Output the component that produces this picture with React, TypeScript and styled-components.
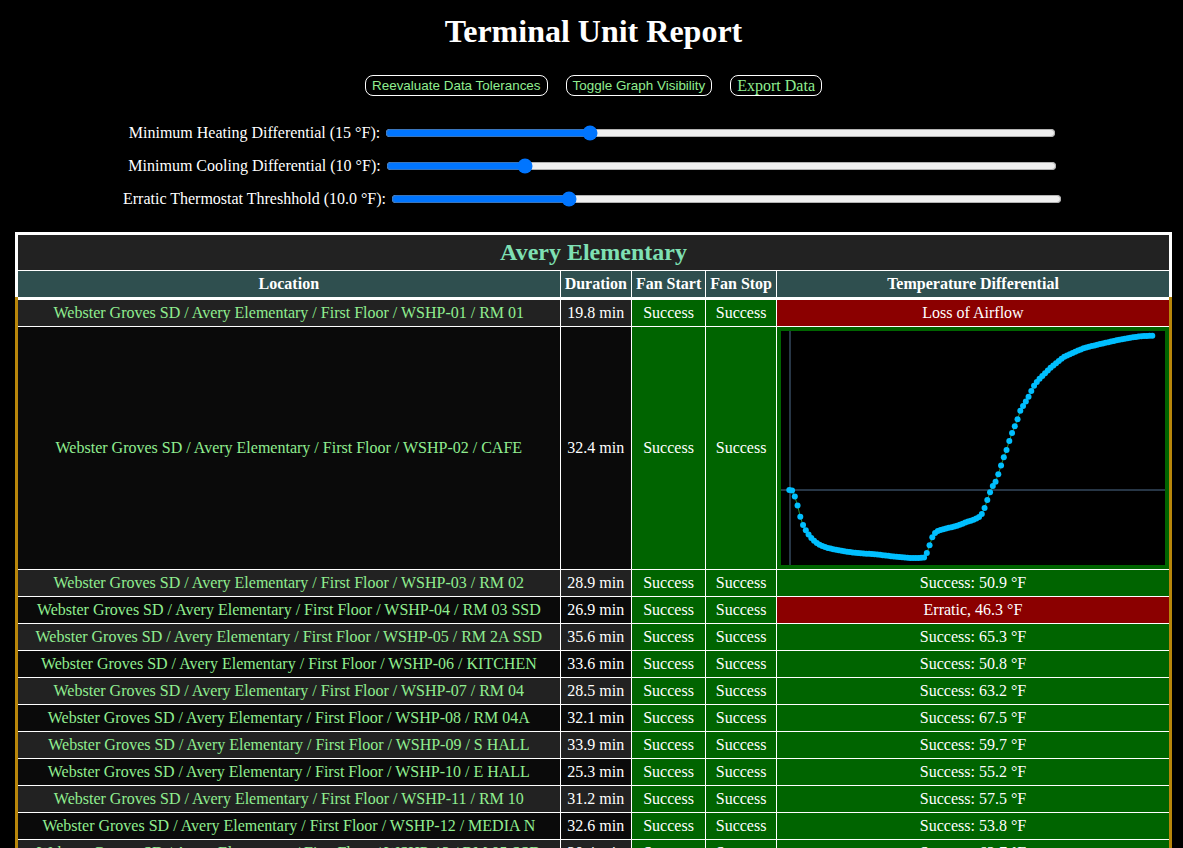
import React from "react";
import styled, { createGlobalStyle } from "styled-components";

const GlobalStyle = createGlobalStyle`
  html, body {
    background: #000;
  }
  body {
    margin: 0;
    color: #fff;
    font-family: "Liberation Serif", "Times New Roman", serif;
    font-size: 16px;
  }
`;

const Page = styled.div`
  box-sizing: border-box;
  width: 100%;
  padding: 13px 4px 8px 8px;
`;

const Title = styled.h1`
  margin: 0;
  text-align: center;
  font-size: 32px;
  font-weight: bold;
  line-height: 37px;
  color: #fff;
`;

const Toolbar = styled.div`
  display: flex;
  justify-content: center;
  gap: 18px;
  margin-top: 25px;
`;

const ActionButton = styled.button<{ $serif?: boolean }>`
  box-sizing: border-box;
  height: 21px;
  padding: 0 6px;
  background: #000;
  color: #90ee90;
  border: 1px solid #fff;
  border-radius: 8px;
  font-family: ${(p) =>
    p.$serif ? '"Liberation Serif", "Times New Roman", serif' : '"Liberation Sans", Arial, sans-serif'};
  font-size: ${(p) => (p.$serif ? "16px" : "13.45px")};
  line-height: 1;
  cursor: pointer;
`;

const Sliders = styled.div`
  display: flex;
  flex-direction: column;
  margin-top: 20px;
`;

const SliderRow = styled.label`
  display: flex;
  justify-content: center;
  align-items: center;
  height: 33px;
  gap: 3px;
  font-size: 16px;
  color: #fff;
`;

const Range = styled.input`
  width: 671px;
  margin: 2px;
  accent-color: #0075ff;
`;

const Table = styled.table`
  border-collapse: collapse;
  width: calc(100% - 14px);
  margin: 17px auto 0;
  border: 3px solid #fff;
  font-size: 16px;
`;

const Head = styled.thead`
  border-bottom: 3px solid #fff;
`;

const Caption = styled.th`
  background: #222;
  color: #7fe0b4;
  font-size: 24px;
  font-weight: bold;
  padding: 4px;
  border: 1px solid #fff;
`;

const HeadCell = styled.th<{ $shrink?: boolean }>`
  background: #2f4f4f;
  color: #fff;
  font-weight: bold;
  padding: 4px;
  border: 1px solid #fff;
  white-space: nowrap;
  width: ${(p) => (p.$shrink ? "1%" : "auto")};
`;

const BodyRow = styled.tr<{ $alt: boolean }>`
  border-left: 3px solid #b8860b;
  border-right: 3px solid #b8860b;
  background: ${(p) => (p.$alt ? "#0a0a0a" : "#222")};
`;

const Cell = styled.td`
  padding: 4px;
  border: 1px solid #fff;
  text-align: center;
  white-space: nowrap;
`;

const LocationCell = styled(Cell)`
  color: #90ee90;
`;

const StatusCell = styled(Cell)<{ $ok: boolean }>`
  background: ${(p) => (p.$ok ? "#006400" : "#8b0000")};
  color: #fff;
`;

const ChartBox = styled.svg`
  display: block;
  background: #000;
`;

type Temp = { kind: "ok" | "fail"; text: string } | { kind: "chart" };

type Row = { room: string; duration: string; temp: Temp };

const prefix = "Webster Groves SD / Avery Elementary / First Floor / ";

const rows: Row[] = [
  { room: "WSHP-01 / RM 01", duration: "19.8 min", temp: { kind: "fail", text: "Loss of Airflow" } },
  { room: "WSHP-02 / CAFE", duration: "32.4 min", temp: { kind: "chart" } },
  { room: "WSHP-03 / RM 02", duration: "28.9 min", temp: { kind: "ok", text: "Success: 50.9 °F" } },
  { room: "WSHP-04 / RM 03 SSD", duration: "26.9 min", temp: { kind: "fail", text: "Erratic, 46.3 °F" } },
  { room: "WSHP-05 / RM 2A SSD", duration: "35.6 min", temp: { kind: "ok", text: "Success: 65.3 °F" } },
  { room: "WSHP-06 / KITCHEN", duration: "33.6 min", temp: { kind: "ok", text: "Success: 50.8 °F" } },
  { room: "WSHP-07 / RM 04", duration: "28.5 min", temp: { kind: "ok", text: "Success: 63.2 °F" } },
  { room: "WSHP-08 / RM 04A", duration: "32.1 min", temp: { kind: "ok", text: "Success: 67.5 °F" } },
  { room: "WSHP-09 / S HALL", duration: "33.9 min", temp: { kind: "ok", text: "Success: 59.7 °F" } },
  { room: "WSHP-10 / E HALL", duration: "25.3 min", temp: { kind: "ok", text: "Success: 55.2 °F" } },
  { room: "WSHP-11 / RM 10", duration: "31.2 min", temp: { kind: "ok", text: "Success: 57.5 °F" } },
  { room: "WSHP-12 / MEDIA N", duration: "32.6 min", temp: { kind: "ok", text: "Success: 53.8 °F" } },
  { room: "WSHP-13 / RM 05 SSD", duration: "30.4 min", temp: { kind: "ok", text: "Success: 62.7 °F" } },
  { room: "WSHP-14 / RM 06", duration: "29.7 min", temp: { kind: "ok", text: "Success: 58.1 °F" } },
];

const control: [number, number][] = [
  [8.3, 159], [11.7, 159.7], [15, 169], [18, 179.7], [20, 189], [22.7, 195.7], [25.7, 200.7],
  [29, 205.7], [34, 210.7], [39, 214], [45.7, 216.7], [55.7, 219], [65.7, 220.7], [79, 222.3],
  [92.3, 223], [105.7, 224.7], [119, 226], [129, 227], [139, 227], [144, 226.3], [145.7, 222.3],
  [148, 216], [150.7, 208], [152.3, 203.3], [157.3, 199.7], [165.7, 197.3], [175.7, 195],
  [185.7, 191], [194, 188.3], [199.7, 185], [203, 179], [205, 172], [207.7, 165.7], [209.7, 159],
  [212.3, 154], [215.7, 149], [217.7, 141.7], [220, 134.7], [223, 125.7], [226, 117.7],
  [228.3, 110], [231, 102], [234, 94.7], [236.7, 88], [239, 80.3], [242.3, 74.7], [245.7, 69],
  [249, 63], [252.3, 55.7], [257.3, 49], [262.3, 44], [269, 37.3], [275.7, 31.7], [282.3, 26.3],
  [292.3, 21.7], [302.3, 17.3], [312.3, 14.7], [322.3, 12.3], [332.3, 10], [342.3, 8],
  [352.3, 6.3], [362.3, 5], [374, 4.7],
];

function interp(x: number): number {
  for (let i = 0; i < control.length - 1; i++) {
    const [x0, y0] = control[i];
    const [x1, y1] = control[i + 1];
    if (x >= x0 && x <= x1) {
      const t = x1 === x0 ? 0 : (x - x0) / (x1 - x0);
      return y0 + (y1 - y0) * t;
    }
  }
  return control[control.length - 1][1];
}

const samples: [number, number][] = (() => {
  const out: [number, number][] = [];
  const start = control[0][0];
  const end = control[control.length - 1][0];
  const step = 2.75;
  for (let x = start; x <= end + 0.01; x += step) out.push([x, interp(x)]);
  return out;
})();

const Chart = () => (
  <ChartBox width={384} height={234} viewBox="0 0 384 234">
    <line x1={9} y1={0} x2={9} y2={234} stroke="#34495e" strokeWidth={1.5} />
    <line x1={0} y1={159} x2={384} y2={159} stroke="#34495e" strokeWidth={1.5} />
    <polyline
      points={samples.map(([x, y]) => `${x},${y}`).join(" ")}
      fill="none"
      stroke="#2e8b2e"
      strokeWidth={1}
    />
    {samples.map(([x, y], i) => (
      <circle key={i} cx={x} cy={y} r={3} fill="#00bfff" />
    ))}
  </ChartBox>
);

export default function App() {
  return (
    <Page>
      <GlobalStyle />
      <Title>Terminal Unit Report</Title>
      <Toolbar>
        <ActionButton>Reevaluate Data Tolerances</ActionButton>
        <ActionButton>Toggle Graph Visibility</ActionButton>
        <ActionButton $serif>Export Data</ActionButton>
      </Toolbar>
      <Sliders>
        <SliderRow>
          Minimum Heating Differential (15 °F):
          <Range type="range" min={0} max={50} step={1} defaultValue={15} />
        </SliderRow>
        <SliderRow>
          Minimum Cooling Differential (10 °F):
          <Range type="range" min={0} max={50} step={1} defaultValue={10} />
        </SliderRow>
        <SliderRow>
          Erratic Thermostat Threshhold (10.0 °F):
          <Range type="range" min={0} max={1000} step={0.5} defaultValue={259.5} />
        </SliderRow>
      </Sliders>
      <Table>
        <Head>
          <tr>
            <Caption colSpan={5}>Avery Elementary</Caption>
          </tr>
          <tr>
            <HeadCell>Location</HeadCell>
            <HeadCell $shrink>Duration</HeadCell>
            <HeadCell $shrink>Fan Start</HeadCell>
            <HeadCell $shrink>Fan Stop</HeadCell>
            <HeadCell $shrink>Temperature Differential</HeadCell>
          </tr>
        </Head>
        <tbody>
          {rows.map((r, i) => (
            <BodyRow key={r.room} $alt={i % 2 === 1}>
              <LocationCell>{prefix + r.room}</LocationCell>
              <Cell>{r.duration}</Cell>
              <StatusCell $ok>Success</StatusCell>
              <StatusCell $ok>Success</StatusCell>
              {r.temp.kind === "chart" ? (
                <StatusCell $ok>
                  <Chart />
                </StatusCell>
              ) : (
                <StatusCell $ok={r.temp.kind === "ok"}>{r.temp.text}</StatusCell>
              )}
            </BodyRow>
          ))}
        </tbody>
      </Table>
    </Page>
  );
}
